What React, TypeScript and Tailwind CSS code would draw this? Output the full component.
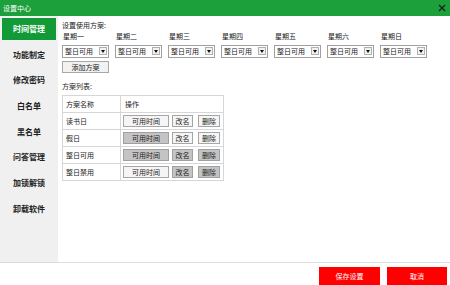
import React from "react"

const menu = ["时间管理", "功能制定", "修改密码", "白名单", "黑名单", "问答管理", "加锁解锁", "卸载软件"]
const days = ["星期一", "星期二", "星期三", "星期四", "星期五", "星期六", "星期日"]

// true = greyed (pressed) button
const plans = [
    { name: "读书日", time: false, rename: false, del: false },
    { name: "假日", time: true, rename: false, del: false },
    { name: "整日可用", time: true, rename: true, del: true },
    { name: "整日禁用", time: false, rename: true, del: true },
]

const Select = () => (
    <div className="w-[47px] h-[13px] border border-[#a0a0a0] bg-white flex items-center">
        <span className="flex-1 pl-[2px] text-[7px] leading-[11px] text-[#1a1a1a]">整日可用</span>
        <span className="w-[8px] h-[8px] mr-[1px] border border-[#b0b0b0] bg-[#f2f2f2] flex items-center justify-center">
            <span className="block w-0 h-0 border-l-[2px] border-r-[2px] border-t-[3px] border-l-transparent border-r-transparent border-t-[#111]" />
        </span>
    </div>
)

const TableButton = ({ text, grey, width }: { text: string; grey: boolean; width: string }) => (
    <div
        className={`${width} h-[12px] border flex items-center justify-center text-[7px] leading-[10px] text-[#222] ${
            grey ? "bg-[#c4c4c4] border-[#a0a0a0]" : "bg-[#f5f5f5] border-[#a6a6a6]"
        }`}
    >
        {text}
    </div>
)

export default function App() {
    return (
        <div
            className="w-[450px] h-[285px] bg-white overflow-hidden flex flex-col"
            style={{ fontFamily: '"Noto Sans CJK SC", "Noto Sans", sans-serif' }}
        >
            {/* title bar */}
            <div className="h-[16px] bg-[#1ba03b] flex items-center justify-between pl-[3px] pr-[4px]">
                <span className="text-[7px] leading-[10px] text-white">设置中心</span>
                <svg width="8" height="8" viewBox="0 0 8 8">
                    <path d="M1 1L7 7M7 1L1 7" stroke="#1a1a1a" strokeWidth="1.1" />
                </svg>
            </div>

            <div className="flex h-[247px]">
                {/* side menu */}
                <div className="w-[58px] bg-[#f0f0f0] pt-[2px] flex flex-col gap-[3.7px]">
                    {menu.map((item, i) => (
                        <div
                            key={item}
                            className={`mx-[2px] h-[22px] flex items-center justify-center text-[8px] leading-[10px] font-bold ${
                                i === 0 ? "bg-[#119a35] text-white" : "text-[#222]"
                            }`}
                        >
                            {item}
                        </div>
                    ))}
                </div>

                {/* content */}
                <div className="flex-1 pl-[4px] pt-[4px] text-[#222]">
                    <div className="text-[7px] leading-[10px]">设置使用方案:</div>
                    <div className="flex gap-[6px] mt-[1px]">
                        {days.map((d) => (
                            <div key={d} className="flex flex-col">
                                <span className="pl-[1px] text-[7px] leading-[10px]">{d}</span>
                                <div className="mt-[4px]">
                                    <Select />
                                </div>
                            </div>
                        ))}
                    </div>
                    <div className="mt-[3px] w-[47px] h-[12px] border border-[#a8a8a8] bg-[#f2f2f2] flex items-center justify-center text-[7px] leading-[10px]">
                        添加方案
                    </div>
                    <div className="mt-[8px] text-[7px] leading-[10px]">方案列表:</div>

                    <table className="mt-[4px] border-collapse border border-[#d6d6d6] text-[7px] leading-[10px]">
                        <tbody>
                            <tr className="h-[17px]">
                                <td className="w-[58px] border border-[#d6d6d6] pl-[3px]">方案名称</td>
                                <td className="w-[103px] border border-[#d6d6d6] pl-[4px]">操作</td>
                            </tr>
                            {plans.map((p) => (
                                <tr key={p.name} className="h-[17px]">
                                    <td className="border border-[#d6d6d6] pl-[3px]">{p.name}</td>
                                    <td className="border border-[#d6d6d6] pl-[2px]">
                                        <div className="flex items-center">
                                            <TableButton text="可用时间" grey={p.time} width="w-[46px]" />
                                            <div className="ml-[3px]">
                                                <TableButton text="改名" grey={p.rename} width="w-[21px]" />
                                            </div>
                                            <div className="ml-[5px]">
                                                <TableButton text="删除" grey={p.del} width="w-[22px]" />
                                            </div>
                                        </div>
                                    </td>
                                </tr>
                            ))}
                        </tbody>
                    </table>
                </div>
            </div>

            {/* footer */}
            <div className="flex-1 border-t border-[#dcdcdc] flex justify-end items-start pt-[4px] pr-[3px] gap-[7px]">
                <div className="w-[61px] h-[18px] bg-[#fe0000] flex items-center justify-center text-[7px] leading-[10px] text-white">
                    保存设置
                </div>
                <div className="w-[60px] h-[18px] bg-[#fe0000] flex items-center justify-center text-[7px] leading-[10px] text-white">
                    取消
                </div>
            </div>
        </div>
    )
}
